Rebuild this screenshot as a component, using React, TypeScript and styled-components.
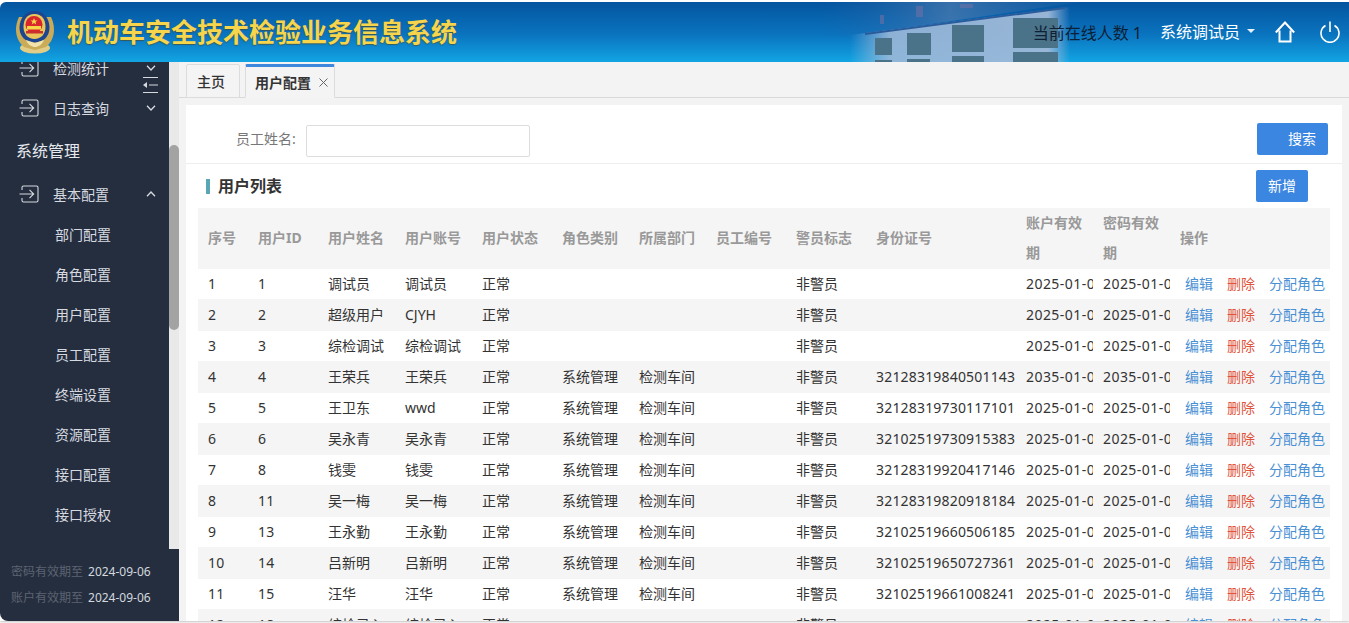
import React from "react";
import styled, { createGlobalStyle } from "styled-components";

const GlobalStyle = createGlobalStyle`
  html, body {
    margin: 0;
    padding: 0;
    background: #fff;
    overflow: hidden;
  }
  * {
    box-sizing: border-box;
  }
  body {
    font-family: "Noto Sans", "Noto Sans CJK SC", sans-serif;
    font-size: 14px;
    color: #333;
  }
`;

const Page = styled.div`
  width: 1349px;
  height: 623px;
  padding: 2px 0;
  display: flex;
  flex-direction: column;
  overflow: hidden;
`;

const Header = styled.header`
  position: relative;
  flex: 0 0 60px;
  display: flex;
  align-items: center;
  padding-left: 15px;
  border-radius: 6px 0 0 0;
  overflow: hidden;
  background: linear-gradient(180deg, #05559f 0%, #0a74bf 55%, #12a5e3 100%);
`;

const Title = styled.h1`
  position: relative;
  margin: 0 0 0 12px;
  font-size: 26px;
  line-height: 60px;
  font-weight: 700;
  color: #f6d54c;
  text-shadow: 0 1px 1px rgba(90, 60, 0, 0.55);
  white-space: nowrap;
`;

const HeaderArt = styled.svg`
  position: absolute;
  left: 780px;
  top: 0;
`;

const HeaderRight = styled.div`
  position: absolute;
  right: 9px;
  top: 0;
  height: 60px;
  display: flex;
  align-items: center;
`;

const Online = styled.span`
  font-size: 16px;
  color: #0d2035;
  margin-right: 18px;
`;

const UserName = styled.span`
  font-size: 16px;
  color: #fff;
  margin-top: -3px;
`;

const Caret = styled.i`
  width: 0;
  height: 0;
  margin: -2px 20px 0 7px;
  border: 4px solid transparent;
  border-top-color: #e8f2fb;
  border-bottom: 0;
`;

const HeadIcon = styled.svg`
  display: block;
  margin-left: 25px;
  &:first-of-type {
    margin-left: 0;
  }
`;

const Body = styled.div`
  flex: 1;
  display: flex;
  min-height: 0;
  box-shadow: 0 1px 2px rgba(0, 0, 0, 0.25);
`;

const Sidebar = styled.aside`
  position: relative;
  flex: 0 0 179px;
  display: flex;
  flex-direction: column;
  background: #252e3e;
  border-radius: 0 0 0 8px;
  overflow: hidden;
`;

const MenuArea = styled.div`
  position: relative;
  flex: 1;
  min-height: 0;
  display: flex;
  overflow: hidden;
`;

const Menu = styled.nav`
  flex: 1;
  margin-top: -14px;
  color: #d6dae0;
`;

const MenuItem = styled.div`
  height: 40px;
  display: flex;
  align-items: center;
  padding: 0 13px 0 19px;
  font-size: 14px;
`;

const MenuLabel = styled.span`
  flex: 1;
  margin-left: 14px;
`;

const Group = styled.div`
  height: 46px;
  padding-left: 16px;
  line-height: 46px;
  font-size: 16px;
  color: #e6e9ee;
`;

const SubItem = styled.div`
  height: 40px;
  line-height: 42px;
  padding-left: 55px;
  font-size: 14px;
  color: #d6dae0;
`;

const CollapseIcon = styled.svg`
  position: absolute;
  left: 142px;
  top: 15px;
`;

const ScrollTrack = styled.div`
  flex: 0 0 10px;
  padding-top: 83px;
  background: #e9e9e9;
`;

const ScrollThumb = styled.div`
  height: 185px;
  border-radius: 5px;
  background: #a3a3a3;
`;

const Expiry = styled.div`
  flex: 0 0 72px;
  padding-top: 10px;
  padding-left: 11px;
`;

const ExpiryRow = styled.div`
  display: flex;
  gap: 5px;
  height: 26px;
  line-height: 26px;
  font-size: 12px;
  color: #5c6472;
  white-space: nowrap;
`;

const ExpiryDate = styled.span`
  color: #d3d8df;
`;

const Main = styled.main`
  flex: 1;
  min-width: 0;
  display: flex;
  flex-direction: column;
  background: #f3f3f3;
`;

const TabBar = styled.div`
  flex: 0 0 36px;
  display: flex;
  align-items: flex-end;
  gap: 5px;
  padding-left: 7px;
  border-bottom: 1px solid #d9d9d9;
`;

const Tab = styled.div<{ $active?: boolean }>`
  height: 34px;
  display: flex;
  align-items: center;
  gap: 8px;
  padding: 0 ${(p) => (p.$active ? 6 : 14)}px 0 ${(p) => (p.$active ? 9 : 10)}px;
  margin-bottom: -1px;
  font-size: 14px;
  font-weight: ${(p) => (p.$active ? 600 : 500)};
  color: #333;
  background: #f4f4f4;
  border: 1px solid #dcdcdc;
  border-top: ${(p) => (p.$active ? "3px solid #3d87dc" : "1px solid #dcdcdc")};
  border-radius: 2px 2px 0 0;
  ${(p) => (p.$active ? "border-bottom-color: #f4f4f4;" : "")}
`;

const TabClose = styled.svg`
  display: block;
`;

const Panel = styled.section`
  flex: 1;
  min-height: 0;
  margin: 7px 7px 0 7px;
  background: #fff;
  overflow: hidden;
`;

const SearchRow = styled.div`
  height: 59px;
  display: flex;
  align-items: flex-start;
  padding: 0 14px 0 50px;
  border-bottom: 1px solid #eee;
`;

const FieldLabel = styled.label`
  margin-top: 24px;
  font-size: 14px;
  line-height: 20px;
  color: #777;
  margin-right: 10px;
`;

const TextInput = styled.input`
  width: 224px;
  height: 32px;
  margin-top: 20px;
  border: 1px solid #ddd;
  border-radius: 2px;
  background: #fff;
  outline: none;
`;

const BlueButton = styled.button<{ $wide?: boolean }>`
  height: 32px;
  width: ${(p) => (p.$wide ? 71 : 52)}px;
  padding: ${(p) => (p.$wide ? "0 12px 2px 0" : "0 0 2px")};
  text-align: ${(p) => (p.$wide ? "right" : "center")};
  border: 0;
  border-radius: 2px;
  background: #3b86e1;
  color: #fff;
  font-family: inherit;
  font-size: 14px;
`;

const SearchButton = styled(BlueButton)`
  margin-left: auto;
  margin-top: 18px;
`;

const TitleRow = styled.div`
  height: 44px;
  display: flex;
  align-items: center;
  padding: 0 34px 0 20px;
`;

const TableTitle = styled.h2`
  flex: 1;
  margin: 0;
  padding-left: 8px;
  border-left: 4px solid #5aa7b4;
  font-size: 16px;
  line-height: 15px;
  font-weight: 700;
  color: #333;
`;

const TableWrap = styled.div`
  margin: 0 12px;
`;

const Table = styled.table`
  width: 1132px;
  table-layout: fixed;
  border-collapse: separate;
  border-spacing: 0;
`;

const Th = styled.th`
  height: 61px;
  padding: 0 0 1px 10px;
  background: #f5f5f5;
  color: #999;
  font-size: 14px;
  font-weight: 700;
  line-height: 30px;
  text-align: left;
`;

const Row = styled.tr`
  & > td {
    height: 30px;
    background: #fff;
  }
  &:nth-child(even) > td {
    height: 32px;
    background: #f5f5f5;
  }
`;

const Td = styled.td`
  padding: 0 0 2px 10px;
  overflow: hidden;
  white-space: nowrap;
  font-size: 14px;
  letter-spacing: 0.18px;
  color: #333;
`;

const DateTd = styled(Td)`
  letter-spacing: 0.45px;
`;

const CnTd = styled(Td)`
  letter-spacing: 0;
`;

const OpsTd = styled(CnTd)`
  padding-left: 15px;
`;

const OpLink = styled.a<{ $danger?: boolean }>`
  margin-right: 14px;
  color: ${(p) => (p.$danger ? "#e0533c" : "#4a90d4")};
  cursor: pointer;
  &:last-child {
    margin-right: 0;
  }
`;

const widths = [50, 70, 77, 77, 80, 77, 77, 80, 80, 150, 77, 77, 160];
const heads = [
  "序号",
  "用户ID",
  "用户姓名",
  "用户账号",
  "用户状态",
  "角色类别",
  "所属部门",
  "员工编号",
  "警员标志",
  "身份证号",
  "账户有效期",
  "密码有效期",
  "操作",
];

const rows = [
  ["1", "1", "调试员", "调试员", "", "", "", "2025-01-01"],
  ["2", "2", "超级用户", "CJYH", "", "", "", "2025-01-01"],
  ["3", "3", "综检调试", "综检调试", "", "", "", "2025-01-01"],
  ["4", "4", "王荣兵", "王荣兵", "系统管理", "检测车间", "32128319840501143", "2035-01-01"],
  ["5", "5", "王卫东", "wwd", "系统管理", "检测车间", "32128319730117101", "2025-01-01"],
  ["6", "6", "吴永青", "吴永青", "系统管理", "检测车间", "32102519730915383", "2025-01-01"],
  ["7", "8", "钱雯", "钱雯", "系统管理", "检测车间", "32128319920417146", "2025-01-01"],
  ["8", "11", "吴一梅", "吴一梅", "系统管理", "检测车间", "32128319820918184", "2025-01-01"],
  ["9", "13", "王永勤", "王永勤", "系统管理", "检测车间", "32102519660506185", "2025-01-01"],
  ["10", "14", "吕新明", "吕新明", "系统管理", "检测车间", "32102519650727361", "2025-01-01"],
  ["11", "15", "汪华", "汪华", "系统管理", "检测车间", "32102519661008241", "2025-01-01"],
  ["12", "18", "综检录入", "综检录入", "", "", "", "2025-01-01"],
];

const subMenus = ["部门配置", "角色配置", "用户配置", "员工配置", "终端设置", "资源配置", "接口配置", "接口授权"];

// building windows in the banner picture: x, y, w, h
const windows = [
  [95, 36, 17, 17],
  [127, 31, 24, 22],
  [172, 23, 32, 27],
  [233, 16, 45, 30],
  [95, 58, 17, 2],
  [127, 57, 23, 3],
  [172, 54, 32, 6],
  [233, 50, 45, 10],
];

const EnterIcon = () => (
  <svg width="20" height="18" viewBox="0 0 20 18" fill="none" stroke="#d6dae0" strokeWidth="1.1">
    <path d="M3 5V2.500q0-1.500 1.500-1.500H17.500q1.500 0 1.500 1.500V15.500q0 1.500-1.500 1.500H4.500Q3 17 3 15.500V13" />
    <path d="M0.500 9h14M10.500 4.800 14.700 9l-4.200 4.200" />
  </svg>
);

const Chevron = ({ up }: { up?: boolean }) => (
  <svg width="10" height="6" viewBox="0 0 10 6" fill="none" stroke="#d6dae0" strokeWidth="1.3">
    <path d={up ? "M1 5.200 5 1l4 4.200" : "M1 .8 5 5l4-4.200"} />
  </svg>
);

const Emblem = () => (
  <svg width="40" height="44" viewBox="0 0 40 44">
    <ellipse cx="20" cy="38" rx="15" ry="5.500" fill="#e2cd86" />
    <path d="M4 7C-1 17 0 30 9 37l11 3 11-3c9-7 10-20 5-30z" fill="#c9ab58" />
    <path d="M19.500 1C10 1 5 8 4.500 17c-.4 9 6 15.500 15 15.500s15.400-6.500 15-15.500C34 8 29 1 19.500 1z" fill="#1c4690" />
    <path d="M19.500 4C12 4 8.500 9.500 8.500 17c0 7 4.500 12 11 12s11-5 11-12c0-7.500-3.500-13-11-13z" fill="#e9c75a" />
    <circle cx="19" cy="14.500" r="8.500" fill="#d8262c" />
    <path d="M19 8l1 2.400h2.500l-2 1.500.8 2.500-2.300-1.500-2.300 1.500.8-2.500-2-1.500H18z" fill="#f8d64a" />
    <rect x="12" y="16" width="14" height="3.500" fill="#f8d64a" />
    <rect x="11" y="21" width="17" height="2.500" fill="#c8322c" />
    <path d="M11 30c2 5 6 7 9 7s7-2 9-7l-9 3z" fill="#f2e3ad" />
  </svg>
);

const BuildingArt = () => (
  <HeaderArt width="320" height="60" viewBox="0 0 320 60">
    <defs>
      <linearGradient id="wall" x1="0" y1="0" x2="1" y2="0">
        <stop offset="0" stopColor="#9cb8d8" stopOpacity="0" />
        <stop offset="0.18" stopColor="#9cb8d8" stopOpacity="0.9" />
        <stop offset="0.9" stopColor="#9fb9d8" stopOpacity="0.95" />
        <stop offset="1" stopColor="#9fb9d8" stopOpacity="0" />
      </linearGradient>
      <linearGradient id="roof" x1="0" y1="0" x2="1" y2="0">
        <stop offset="0" stopColor="#1e5fa6" stopOpacity="0" />
        <stop offset="0.5" stopColor="#4a79ae" stopOpacity="0.75" />
        <stop offset="1" stopColor="#2e68a8" stopOpacity="0.2" />
      </linearGradient>
    </defs>
    <path d="M40 0H300L90 31 40 36z" fill="url(#roof)" />
    <path d="M70 33 290 5V60H70z" fill="url(#wall)" />
    <path d="M85 32 285 6" stroke="#2a5c9c" strokeWidth="2" fill="none" />
    {windows.map(([x, y, w, h]) => (
      <rect key={`${x}-${y}`} x={x} y={y} width={w} height={h} fill="#4a7288" />
    ))}
    <path d="M100 13H104V22H100zM136 4H143V15H136zM180 2H193V6H180z" fill="#6d6fa5" opacity="0.6" />
  </HeaderArt>
);

export default function App() {
  return (
    <>
      <GlobalStyle />
      <Page>
        <Header>
          <BuildingArt />
          <Emblem />
          <Title>机动车安全技术检验业务信息系统</Title>
          <HeaderRight>
            <Online>当前在线人数 1</Online>
            <UserName>系统调试员</UserName>
            <Caret />
            <HeadIcon width="20" height="22" viewBox="0 0 20 22" fill="none" stroke="#fff" strokeWidth="2">
              <path d="M.8 11.500 10 1.500l9.200 10M4.500 9.500V20.500h11V9.500" />
            </HeadIcon>
            <HeadIcon width="20" height="22" viewBox="0 0 20 22" fill="none" stroke="#fff" strokeWidth="1.600">
              <path d="M5.500 4.500a9 9 0 1 0 9 0M10 .5v10.500" />
            </HeadIcon>
          </HeaderRight>
        </Header>
        <Body>
          <Sidebar>
            <MenuArea>
              <Menu>
                <MenuItem>
                  <EnterIcon />
                  <MenuLabel>检测统计</MenuLabel>
                  <Chevron />
                </MenuItem>
                <MenuItem>
                  <EnterIcon />
                  <MenuLabel>日志查询</MenuLabel>
                  <Chevron />
                </MenuItem>
                <Group>系统管理</Group>
                <MenuItem>
                  <EnterIcon />
                  <MenuLabel>基本配置</MenuLabel>
                  <Chevron up />
                </MenuItem>
                {subMenus.map((m) => (
                  <SubItem key={m}>{m}</SubItem>
                ))}
              </Menu>
              <CollapseIcon width="16" height="16" viewBox="0 0 16 16" fill="none" stroke="#d6dae0" strokeWidth="1">
                <path d="M1 .5h15M7 8h9M1 15.500h15" />
                <path d="M1 8l4-3v6z" fill="#d6dae0" stroke="none" />
              </CollapseIcon>
              <ScrollTrack>
                <ScrollThumb />
              </ScrollTrack>
            </MenuArea>
            <Expiry>
              <ExpiryRow>
                密码有效期至<ExpiryDate>2024-09-06</ExpiryDate>
              </ExpiryRow>
              <ExpiryRow>
                账户有效期至<ExpiryDate>2024-09-06</ExpiryDate>
              </ExpiryRow>
            </Expiry>
          </Sidebar>
          <Main>
            <TabBar>
              <Tab>主页</Tab>
              <Tab $active>
                用户配置
                <TabClose width="9" height="9" viewBox="0 0 9 9" stroke="#666" strokeWidth="1">
                  <path d="M.5.5l8 8M8.500.5l-8 8" />
                </TabClose>
              </Tab>
            </TabBar>
            <Panel>
              <SearchRow>
                <FieldLabel>员工姓名:</FieldLabel>
                <TextInput />
                <SearchButton $wide>搜索</SearchButton>
              </SearchRow>
              <TitleRow>
                <TableTitle>用户列表</TableTitle>
                <BlueButton>新增</BlueButton>
              </TitleRow>
              <TableWrap>
                <Table>
                  <colgroup>
                    {widths.map((w, i) => (
                      <col key={i} width={w} />
                    ))}
                  </colgroup>
                  <thead>
                    <tr>
                      {heads.map((h) => (
                        <Th key={h}>{h}</Th>
                      ))}
                    </tr>
                  </thead>
                  <tbody>
                    {rows.map((r) => (
                      <Row key={r[0]}>
                        <Td>{r[0]}</Td>
                        <Td>{r[1]}</Td>
                        <CnTd>{r[2]}</CnTd>
                        <CnTd>{r[3]}</CnTd>
                        <CnTd>正常</CnTd>
                        <CnTd>{r[4]}</CnTd>
                        <CnTd>{r[5]}</CnTd>
                        <Td />
                        <CnTd>非警员</CnTd>
                        <Td>{r[6]}</Td>
                        <DateTd>{r[7]}</DateTd>
                        <DateTd>{r[7]}</DateTd>
                        <OpsTd>
                          <OpLink>编辑</OpLink>
                          <OpLink $danger>删除</OpLink>
                          <OpLink>分配角色</OpLink>
                        </OpsTd>
                      </Row>
                    ))}
                  </tbody>
                </Table>
              </TableWrap>
            </Panel>
          </Main>
        </Body>
      </Page>
    </>
  );
}
